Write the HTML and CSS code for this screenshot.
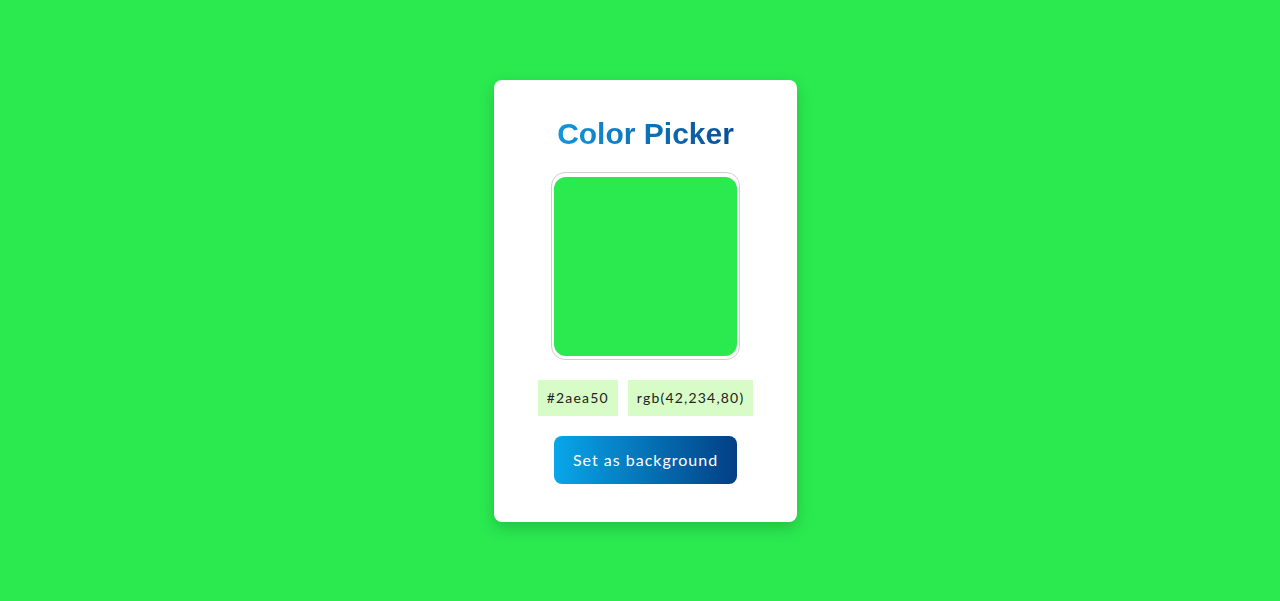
FILE: index.html
```html
<!DOCTYPE html>
<html lang="en">

<head>
    <meta charset="UTF-8" />
    <meta name="viewport" content="width=device-width, initial-scale=1.0" />
    <title>Color Picker</title>
    <link rel="stylesheet" href="styles.css">
</head>

<body>
    <div class="card">
        <h1 class="title">Color Picker</h1>

        <div class="swatch-frame">
            <div class="swatch"></div>
        </div>

        <div class="values">
            <span class="value">#2aea50</span>
            <span class="value">rgb(42,234,80)</span>
        </div>

        <button class="set-button">Set as background</button>
    </div>
</body>

</html>
```
FILE: styles.css
```css
* {
    box-sizing: border-box;
}

body {
    margin: 0;
    padding-left: 11px;
    height: 100vh;
    background-color: #2aea50;
    display: flex;
    justify-content: center;
    align-items: center;
}

.card {
    width: 303px;
    height: 442px;
    background-color: white;
    border-radius: 8px;
    padding: 35px 20px 0;
    display: flex;
    flex-direction: column;
    align-items: center;
    box-shadow: 0 6px 16px rgba(0, 0, 0, 0.18);
}

.title {
    margin: 0 0 20px;
    font-family: "Liberation Sans", Arial, sans-serif;
    font-size: 30px;
    line-height: 37px;
    font-weight: bold;
    background: linear-gradient(to right, #1196dc, #0a4f95);
    -webkit-background-clip: text;
    background-clip: text;
    color: transparent;
}

.swatch-frame {
    width: 189px;
    height: 188px;
    padding: 4px 2px 3px;
    border: 1px solid #cfcfcf;
    border-radius: 14px;
}

.swatch {
    width: 100%;
    height: 100%;
    background-color: #2aea50;
    border-radius: 12px;
}

.values {
    display: flex;
    gap: 10px;
    margin-top: 20px;
}

.value {
    height: 36px;
    padding: 0 9px;
    display: flex;
    align-items: center;
    background-color: #d8fcc8;
    color: #222;
    font-family: Lato, "Open Sans", sans-serif;
    font-size: 14px;
    letter-spacing: 1.2px;
}

.set-button {
    margin-top: 20px;
    width: 183px;
    height: 48px;
    border: 0;
    border-radius: 8px;
    background: linear-gradient(to right, #08a6ea, #033f84);
    color: white;
    font-family: Lato, "Open Sans", sans-serif;
    font-size: 16px;
    letter-spacing: 1px;
    cursor: pointer;
}
```
